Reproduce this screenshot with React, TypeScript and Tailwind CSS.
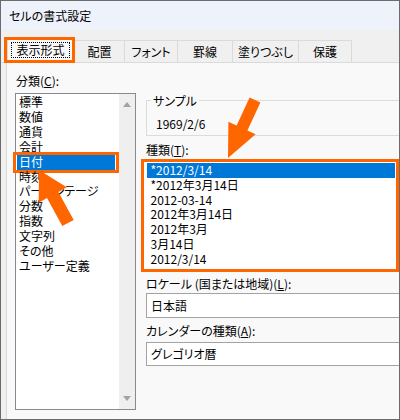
import React from 'react';

const categories = ['標準', '数値', '通貨', '会計', '日付', '時刻', 'パーセンテージ', '分数', '指数', '文字列', 'その他', 'ユーザー定義'];
const formats = ['*2012/3/14', '*2012年3月14日', '2012-03-14', '2012年3月14日', '2012年3月', '3月14日', '2012/3/14'];

const tabs = [
  { label: '配置', w: 'w-[50px]' },
  { label: 'フォント', w: 'w-[53px]' },
  { label: '罫線', w: 'w-[55px]' },
  { label: '塗りつぶし', w: 'w-[66px]' },
  { label: '保護', w: 'w-[53px]' },
];

function Mnemonic({ text, k }: { text: string; k: string }) {
  return (
    <div className="leading-[15px] h-[15px] whitespace-nowrap">
      {text}(<span className="underline">{k}</span>):
    </div>
  );
}

export default function App() {
  return (
    <div className="relative w-[400px] h-[420px] overflow-hidden border border-[#6b6b6b] bg-[#f0f0f0] font-['Noto_Sans_CJK_JP',sans-serif] [font-feature-settings:'palt'] text-[12px] text-black flex flex-col">
      {/* タイトルバー */}
      <div className="h-[29px] shrink-0 bg-[#eef2fa] flex items-center pl-[8px]">セルの書式設定</div>

      {/* タブ */}
      <div className="h-[33px] shrink-0 flex items-end pl-[6px] border-b border-[#dadada]">
        <div className="relative w-[68px] h-[26px] -mb-px bg-[#f9f9f9] border-x border-t border-[#dadada] z-10">
          <div className="absolute left-[3px] right-[4px] top-[4px] bottom-[5px] border border-dotted border-black flex items-center justify-center">
            表示形式
          </div>
          <span className="absolute -left-[4px] -right-[1px] -top-[1px] bottom-0 border-[3px] border-[#ff6600]" />
        </div>
        {tabs.map((t) => (
          <div
            key={t.label}
            className={`${t.w} h-[22px] border-t border-r border-[#dadada] bg-[#f0f0f0] flex items-center justify-center`}
          >
            {t.label}
          </div>
        ))}
      </div>

      {/* パネル */}
      <div className="flex-1 ml-[5px] bg-[#f9f9f9] border-l border-[#dadada] flex gap-[10px] pl-[8px]">
        {/* 分類 */}
        <div className="w-[121px] shrink-0 pt-[10px] pl-px">
          <Mnemonic text="分類" k="C" />
          <div className="mt-[5px] -ml-px h-[317px] border border-[#858a93] bg-white flex">
            <div className="flex-1 pt-[1.3px] pl-px pr-[4px]">
              {categories.map((c) => (
                <div
                  key={c}
                  className={`relative h-[14.85px] leading-[14.85px] pl-[2px] whitespace-nowrap ${
                    c === '日付' ? 'bg-[#0078d7] text-white' : ''
                  }`}
                >
                  {c}
                  {c === '日付' && (
                    <span className="absolute -left-[4px] -right-[4px] -top-[3px] -bottom-[3px] border-[3px] border-[#ff6600]" />
                  )}
                </div>
              ))}
            </div>
            <div className="w-[16px] bg-[#efefef] flex flex-col items-center justify-between pt-[8px] pb-[8px]">
              <svg width="8" height="5" viewBox="0 0 8 5">
                <path d="M0 5 L4 0 L8 5 Z" fill="#a3a3a3" />
              </svg>
              <svg width="8" height="5" viewBox="0 0 8 5">
                <path d="M0 0 L8 0 L4 5 Z" fill="#a3a3a3" />
              </svg>
            </div>
          </div>
        </div>

        {/* 右側 */}
        <div className="flex-1 min-w-0 flex flex-col pt-[29.5px]">
          <fieldset className="w-[280px] border border-[#dcdcdc]">
            <legend className="ml-[4px] px-[2px] leading-[15px]">サンプル</legend>
            <div className="pt-[8px] pb-[4px] pl-[9px] leading-[15px]">1969/2/6</div>
          </fieldset>

          <div className="mt-[6px]">
            <Mnemonic text="種類" k="T" />
          </div>
          <div className="mt-[2.5px] -ml-[5px] w-[258px] h-[113px] shrink-0 border-[3px] border-[#ff6600] bg-white pt-px pl-[3px] pr-px">
            {formats.map((f, i) => (
              <div
                key={i}
                className={`h-[14.8px] leading-[14.8px] pl-[3.5px] whitespace-nowrap ${
                  i === 0 ? 'bg-[#0078d7] text-white' : ''
                }`}
              >
                {f}
              </div>
            ))}
          </div>

          <div className="mt-[3.5px]">
            <div className="leading-[15px] h-[15px] whitespace-nowrap">
              ロケール (国または地域)(<span className="underline">L</span>):
            </div>
          </div>
          <div className="mt-[2.5px] w-[280px] h-[25px] shrink-0 border border-[#a3a3a3] bg-white flex items-center pl-[4px]">
            日本語
          </div>

          <div className="mt-[4.5px]">
            <Mnemonic text="カレンダーの種類" k="A" />
          </div>
          <div className="mt-[4.5px] w-[280px] h-[24px] shrink-0 border border-[#a3a3a3] bg-white flex items-center pl-[4px]">
            グレゴリオ暦
          </div>
        </div>
      </div>

      {/* 注釈の矢印 */}
      <svg
        className="absolute -left-px -top-px pointer-events-none"
        width="400"
        height="420"
        viewBox="0 0 400 420"
      >
        <polygon
          points="39,170 66.7,187.3 58.4,191.9 73.7,219.9 62.3,226.1 47,198.1 38.7,202.7"
          fill="#ff6600"
        />
        <polygon
          points="228,158 228.4,121.7 236.6,125.5 249.6,97.5 260.4,102.5 247.4,130.5 255.6,134.3"
          fill="#ff6600"
        />
      </svg>
    </div>
  );
}
